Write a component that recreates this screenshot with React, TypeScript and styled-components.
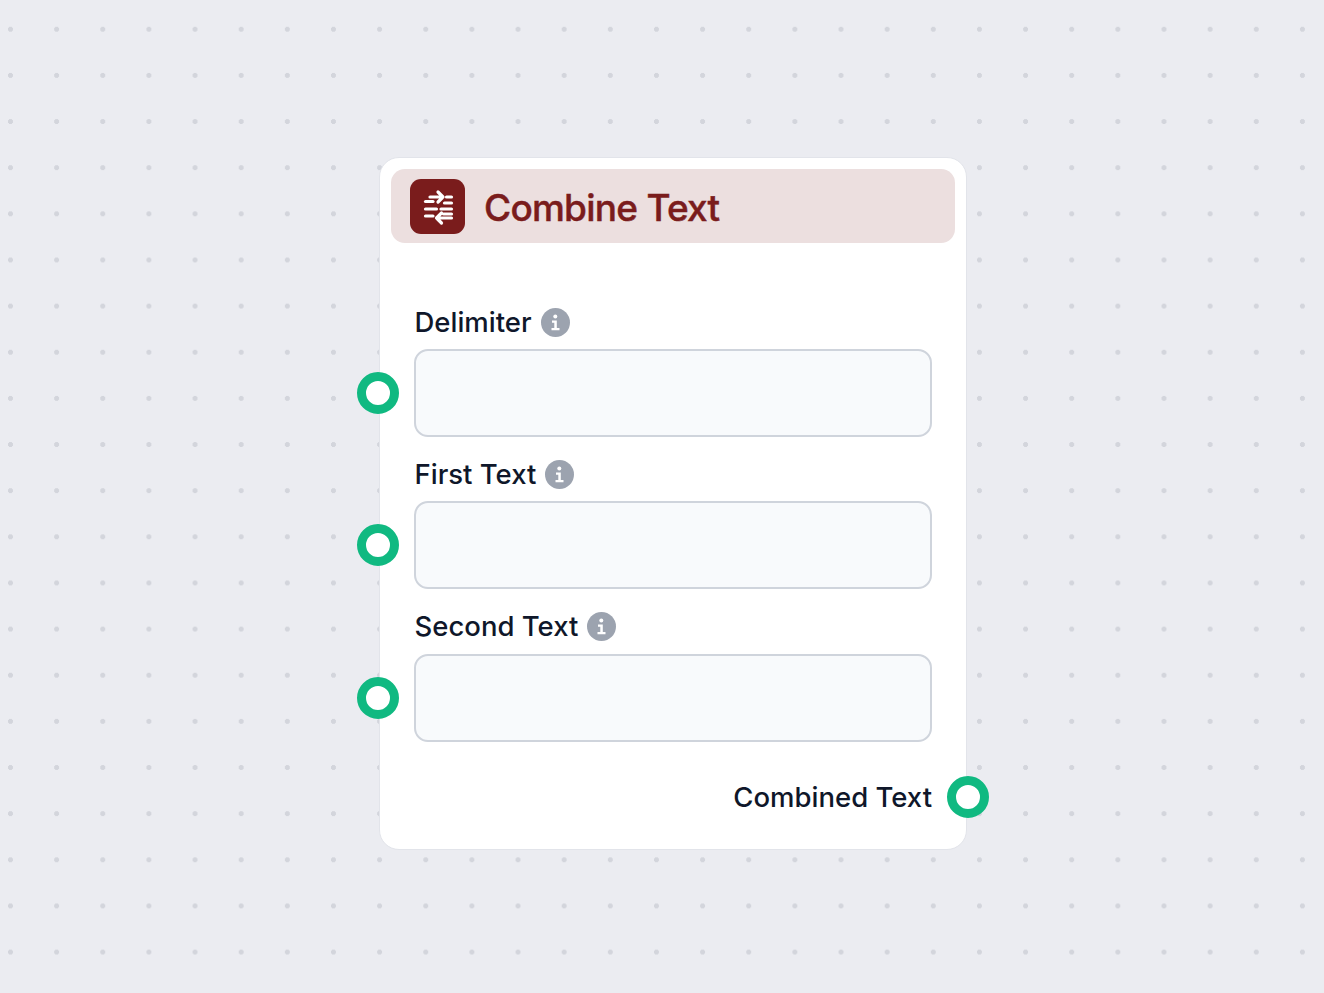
import React from 'react';
import styled, { createGlobalStyle } from 'styled-components';

const GlobalStyle = createGlobalStyle`
  html, body {
    margin: 0;
    padding: 0;
    height: 100%;
  }
  * {
    box-sizing: border-box;
  }
`;

const Canvas = styled.div`
  width: 1324px;
  height: 993px;
  overflow: hidden;
  padding: 157px 0 0 379px;
  background-color: #ebecf1;
  background-image: radial-gradient(circle, #d3d5dc 2.3px, transparent 2.8px);
  background-size: 46.15px 46.15px;
  background-position: -12.6px 6.2px;
  font-family: Inter, "Liberation Sans", sans-serif;
`;

const Node = styled.div`
  width: 588px;
  height: 693px;
  padding: 11px;
  background: #fff;
  border: 1px solid #e2e4ea;
  border-radius: 20px;
  display: flex;
  flex-direction: column;
`;

const Header = styled.div`
  height: 74px;
  padding: 0 19px;
  background: #ecdfdf;
  border-radius: 14px;
  display: flex;
  align-items: center;
  gap: 19px;
`;

const IconTile = styled.div`
  width: 55px;
  height: 55px;
  background: #7a1c1c;
  border-radius: 11px;
`;

const Title = styled.h1`
  margin: 3px 0 0;
  color: #7a1c1c;
  font-size: 37px;
  font-weight: 500;
  line-height: 40px;
  letter-spacing: -0.75px;
  -webkit-text-stroke: 0.45px #7a1c1c;
`;

const Fields = styled.div`
  margin-top: 63px;
  padding: 0 23.5px;
  display: flex;
  flex-direction: column;
  gap: 21.4px;
`;

const Field = styled.div`
  position: relative;
  display: flex;
  flex-direction: column;
  gap: 11px;
`;

const Label = styled.label`
  height: 32px;
  display: flex;
  align-items: center;
  gap: 9px;
  color: #0f172a;
  font-size: 27.5px;
  font-weight: 500;
  line-height: 31px;
`;

const TextBox = styled.input`
  width: 518px;
  height: 88px;
  margin-left: -0.5px;
  background: #f8fafc;
  border: 2px solid #cfd4dc;
  border-radius: 14px;
  outline: none;
`;

const Handle = styled.span`
  position: absolute;
  width: 42px;
  height: 42px;
  background: #fff;
  border: 9px solid #10b981;
  border-radius: 50%;
`;

const InputHandle = styled(Handle)`
  left: -57.5px;
  bottom: 23px;
`;

const OutputRow = styled.div`
  position: relative;
  margin-top: 34.2px;
  padding-right: 23px;
  height: 42px;
  display: flex;
  align-items: center;
  justify-content: flex-end;
  color: #0f172a;
  font-size: 27.5px;
  font-weight: 500;
`;

const OutputHandle = styled(Handle)`
  right: -34px;
  top: 0;
`;

const CombineIcon = () => (
  <svg width="55" height="55" viewBox="0 0 55 55" fill="none" stroke="#fff" strokeLinecap="round" strokeLinejoin="round">
    <g strokeWidth="3.200">
      <path d="M15.500 22.500h7.500" />
      <path d="M36.500 18h5" />
      <path d="M34.500 24h7" />
      <path d="M15.500 30h11" />
      <path d="M31 30h10.500" />
      <path d="M15.500 37h7.500" />
      <path d="M33.500 35h8" />
    </g>
    <path d="M20 18h13M28 13l5 5-5 5" strokeWidth="3.200" />
    <path d="M41.500 39H26.500M31.500 34l-5 5 5 5" strokeWidth="3.200" />
  </svg>
);

const InfoIcon = () => (
  <svg width="29" height="29" viewBox="0 0 29 29">
    <circle cx="14.5" cy="14.500" r="14.500" fill="#9ca3af" />
    <circle cx="14.300" cy="8.600" r="2" fill="#fff" />
    <path d="M11 12.600h4.800v7.400H18.500v2.200H10.500V20h2.800v-5.200H11z" fill="#fff" />
  </svg>
);

const fields = ['Delimiter', 'First Text', 'Second Text'];

const App: React.FC = () => {
  return (
    <Canvas>
      <GlobalStyle />
      <Node>
        <Header>
          <IconTile>
            <CombineIcon />
          </IconTile>
          <Title>Combine Text</Title>
        </Header>
        <Fields>
          {fields.map((name) => (
            <Field key={name}>
              <Label>
                {name}
                <InfoIcon />
              </Label>
              <TextBox />
              <InputHandle />
            </Field>
          ))}
        </Fields>
        <OutputRow>
          Combined Text
          <OutputHandle />
        </OutputRow>
      </Node>
    </Canvas>
  );
};

export default App;
